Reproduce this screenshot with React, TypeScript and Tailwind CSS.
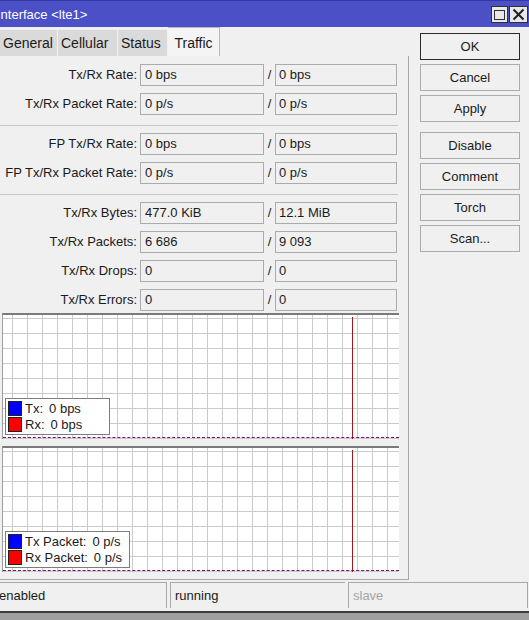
import React from "react";

type Pair = { label: string; tx: string; rx: string };

const rateRows: Pair[] = [
  { label: "Tx/Rx Rate:", tx: "0 bps", rx: "0 bps" },
  { label: "Tx/Rx Packet Rate:", tx: "0 p/s", rx: "0 p/s" },
];

const fpRows: Pair[] = [
  { label: "FP Tx/Rx Rate:", tx: "0 bps", rx: "0 bps" },
  { label: "FP Tx/Rx Packet Rate:", tx: "0 p/s", rx: "0 p/s" },
];

const totalRows: Pair[] = [
  { label: "Tx/Rx Bytes:", tx: "477.0 KiB", rx: "12.1 MiB" },
  { label: "Tx/Rx Packets:", tx: "6 686", rx: "9 093" },
  { label: "Tx/Rx Drops:", tx: "0", rx: "0" },
  { label: "Tx/Rx Errors:", tx: "0", rx: "0" },
];

const tabs = [
  { name: "General", width: "w-[58px]" },
  { name: "Cellular", width: "w-[60px]" },
  { name: "Status", width: "w-[50px]" },
];

const FieldRow = ({ row }: { row: Pair }) => (
  <div className="flex items-center h-[22px]">
    <div className="w-[140px] pr-[3px] text-right whitespace-nowrap">{row.label}</div>
    <div className="w-[124px] h-[22px] border border-[#ababab] bg-[#f0f0f0] pl-[4px] flex items-center">
      {row.tx}
    </div>
    <div className="w-[11px] text-center">/</div>
    <div className="w-[122px] h-[22px] border border-[#ababab] bg-[#f0f0f0] pl-[3px] flex items-center">
      {row.rx}
    </div>
  </div>
);

const Separator = ({ className }: { className: string }) => (
  <div className={`h-px w-[398px] bg-[#c6c6c6] ${className}`} />
);

type Legend = { width: string; items: { label: string; value: string }[] };

const Graph = ({ legend }: { legend: Legend }) => (
  <div className="relative ml-[2px] w-[397px] h-[126px] border-t-2 border-t-[#7a7a7a] border-l border-l-[#9c9c9c] bg-white bg-[linear-gradient(to_right,#cbcbcb_1px,transparent_1px),linear-gradient(to_bottom,#cbcbcb_1px,transparent_1px)] bg-[size:15px_15px] bg-[position:9px_3px]">
    {/* time cursor */}
    <div className="absolute left-[349px] top-[2px] bottom-0 w-px bg-[#a01818]" />
    {/* baseline */}
    <div className="absolute left-0 right-0 bottom-[1px] border-b border-dashed border-[#7a0a7a]" />
    <div
      className={`absolute left-[2px] bottom-[4px] ${legend.width} bg-white border border-[#7d7d7d] py-[2px] pl-[2px] flex flex-col gap-px`}
    >
      {legend.items.map((l, i) => (
        <div key={l.label} className="flex items-center h-[15px] leading-[15px] text-[13px]">
          <div
            className={`w-[14px] h-[15px] border border-[#202020] mr-[3px] ${
              i === 0 ? "bg-[#0000ff]" : "bg-[#ff0000]"
            }`}
          />
          <span className="whitespace-pre">{l.label}</span>
          <span className="ml-[6px]">{l.value}</span>
        </div>
      ))}
    </div>
  </div>
);

const SideButton = ({ label, primary }: { label: string; primary?: boolean }) => (
  <div
    className={`w-[100px] h-[27px] flex items-center justify-center bg-[#f0f0f0] border ${
      primary ? "border-[#2a2a2a]" : "border-[#acacac]"
    }`}
  >
    {label}
  </div>
);

export default function App() {
  return (
    <div
      className="w-[529px] h-[620px] overflow-hidden bg-[#f0f0f0] text-[13px] text-[#1a1a1a] flex flex-col"
      style={{ fontFamily: '"Liberation Sans", Arial, sans-serif' }}
    >
      {/* title bar */}
      <div className="h-[27px] shrink-0 bg-[#4b50c6] border-t border-[#3338a0] flex items-center justify-between">
        <div className="text-white text-[13px] -ml-[3px] mt-[1px]">Interface &lt;lte1&gt;</div>
        <div className="flex gap-px mr-[1px] mt-[1px]">
          <div className="w-[17px] h-[17px] bg-[#e8e8e8] border border-[#303030] flex items-center justify-center">
            <div className="w-[11px] h-[10px] border border-[#303030]" />
          </div>
          <div className="w-[19px] h-[17px] bg-[#e8e8e8] border border-[#303030] flex items-center justify-center">
            <svg width="13" height="13" viewBox="0 0 13 13">
              <path d="M1.5 1.5L11.5 11.5M11.5 1.5L1.5 11.5" stroke="#202020" strokeWidth="2" />
            </svg>
          </div>
        </div>
      </div>

      <div className="flex flex-1 min-h-0">
        {/* main panel */}
        <div className="w-[409px] shrink-0 flex flex-col">
          <div className="flex items-end h-[29px] pt-[1px] text-[14px]">
            {tabs.map((t) => (
              <div
                key={t.name}
                className={`${t.width} h-[26px] pl-[3px] flex items-center bg-[#dadada] border-r border-[#f2f2f2]`}
              >
                {t.name}
              </div>
            ))}
            <div className="h-[29px] w-[52px] flex items-start justify-center pt-[5px] bg-[#f4f4f4] border-r border-t border-[#b8b8b8]">
              Traffic
            </div>
          </div>
          <div className="h-[525px] border-r border-b border-[#a8a8a8] pt-[8px]">
            <div className="flex flex-col gap-[7px]">
              {rateRows.map((r) => (
                <FieldRow key={r.label} row={r} />
              ))}
            </div>
            <Separator className="mt-[10px] mb-[7px]" />
            <div className="flex flex-col gap-[7px]">
              {fpRows.map((r) => (
                <FieldRow key={r.label} row={r} />
              ))}
            </div>
            <Separator className="mt-[10px] mb-[7px]" />
            <div className="flex flex-col gap-[7px]">
              {totalRows.map((r) => (
                <FieldRow key={r.label} row={r} />
              ))}
            </div>
            <div className="mt-[2px] flex flex-col gap-[7px]">
              <Graph
                legend={{
                  width: "w-[105px]",
                  items: [
                    { label: "Tx:", value: "0 bps" },
                    { label: "Rx:", value: "0 bps" },
                  ],
                }}
              />
              <Graph
                legend={{
                  width: "w-[125px]",
                  items: [
                    { label: "Tx Packet:", value: "0 p/s" },
                    { label: "Rx Packet:", value: "0 p/s" },
                  ],
                }}
              />
            </div>
          </div>
        </div>

        {/* action buttons */}
        <div className="pl-[11px] pt-[6px] flex flex-col">
          <div className="flex flex-col gap-[4px]">
            <SideButton label="OK" primary />
            <SideButton label="Cancel" />
            <SideButton label="Apply" />
          </div>
          <div className="mt-[10px] flex flex-col gap-[4px]">
            <SideButton label="Disable" />
            <SideButton label="Comment" />
            <SideButton label="Torch" />
            <SideButton label="Scan..." />
          </div>
        </div>
      </div>

      {/* status bar */}
      <div className="h-[26px] shrink-0 flex mt-[2px] gap-[3px]">
        <div className="w-[168px] border-t border-r border-[#a8a8a8] flex items-center -ml-[1px] pl-0">enabled</div>
        <div className="w-[175px] border-t border-l border-[#a8a8a8] flex items-center pl-[4px]">running</div>
        <div className="flex-1 mr-[1px] border-t border-l border-r border-[#a8a8a8] flex items-center pl-[4px] text-[#a4a4a4]">
          slave
        </div>
      </div>
      <div className="h-[9px] shrink-0 mt-[3px] bg-[#a0a0a0] border-t-2 border-[#3c3c3c]" />
    </div>
  );
}
